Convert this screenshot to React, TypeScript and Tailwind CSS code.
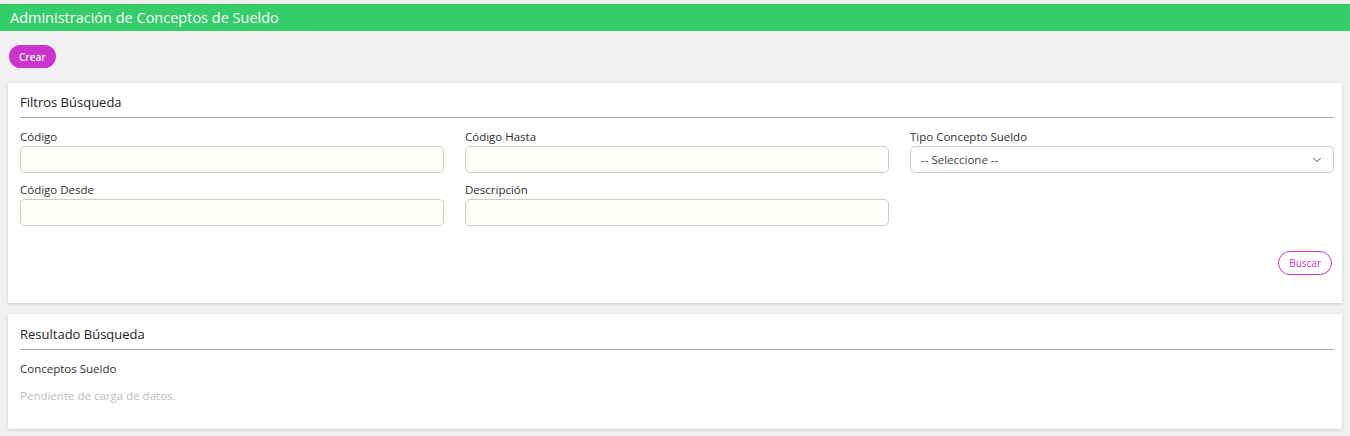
import { ChevronDown } from 'lucide-react';

const font = { fontFamily: '"Open Sans", "Noto Sans", sans-serif' };

function Field({ label, children }: { label: string; children: React.ReactNode }) {
  return (
    <div className="flex flex-col">
      <label className="text-[11.5px] leading-[16px] font-medium text-[#2f2f2f] mb-[1px]">{label}</label>
      {children}
    </div>
  );
}

function TextInput() {
  return <input className="h-[27px] w-full rounded-[5px] border border-[#ccc] bg-[#fffffc] px-2 text-[12px] outline-none" />;
}

export default function App() {
  return (
    <div className="min-h-[436px] bg-[#f0f0f0] pt-[4px]" style={font}>
      <div className="h-[27px] bg-[#35cc6a] px-[10px] flex items-center">
        <h1 className="text-[14.5px] text-white">Administración de Conceptos de Sueldo</h1>
      </div>

      <div className="px-[8px] pb-[6px]">
        <div className="flex pt-[14px] pb-[15px] pl-[1px]">
          <button className="h-[23px] px-[10px] rounded-full bg-[#cc33cc] text-white text-[10px] leading-none font-semibold">
            Crear
          </button>
        </div>

        <div className="bg-white shadow-[0_1px_3px_rgba(0,0,0,0.15)] pl-[12px] pr-[8px] pt-[11px] pb-[28px]">
          <h2 className="text-[13px] text-[#222] leading-[16px] pb-[7px]">Filtros Búsqueda</h2>
          <div className="border-t border-[#aaa]" />
          <div className="grid grid-cols-3 gap-x-[21px] gap-y-[9px] pt-[11px]">
            <Field label="Código"><TextInput /></Field>
            <Field label="Código Hasta"><TextInput /></Field>
            <Field label="Tipo Concepto Sueldo">
              <div className="h-[27px] w-full rounded-[5px] border border-[#ccc] bg-white pl-[10px] pr-[9px] flex items-center justify-between">
                <span className="text-[11.5px] text-[#444]">-- Seleccione --</span>
                <ChevronDown className="h-[14px] w-[14px] text-[#333]" strokeWidth={1.5} />
              </div>
            </Field>
            <Field label="Código Desde"><TextInput /></Field>
            <Field label="Descripción"><TextInput /></Field>
          </div>
          <div className="flex justify-end pt-[25px] pr-[2px]">
            <button className="h-[24px] px-[10px] rounded-full border border-[#cc33cc] text-[#cc33cc] text-[10px] leading-none bg-white">
              Buscar
            </button>
          </div>
        </div>

        <div className="mt-[11px] bg-white shadow-[0_1px_3px_rgba(0,0,0,0.15)] pl-[12px] pr-[8px] pt-[12px] pb-[25px]">
          <h2 className="text-[13px] text-[#222] leading-[16px] pb-[7px]">Resultado Búsqueda</h2>
          <div className="border-t border-[#aaa]" />
          <div className="pt-[11px] text-[11.5px] leading-[16px] font-medium text-[#2f2f2f]">Conceptos Sueldo</div>
          <div className="pt-[11px] text-[11.5px] leading-[16px] text-[#bbb]">Pendiente de carga de datos.</div>
        </div>
      </div>
    </div>
  );
}
